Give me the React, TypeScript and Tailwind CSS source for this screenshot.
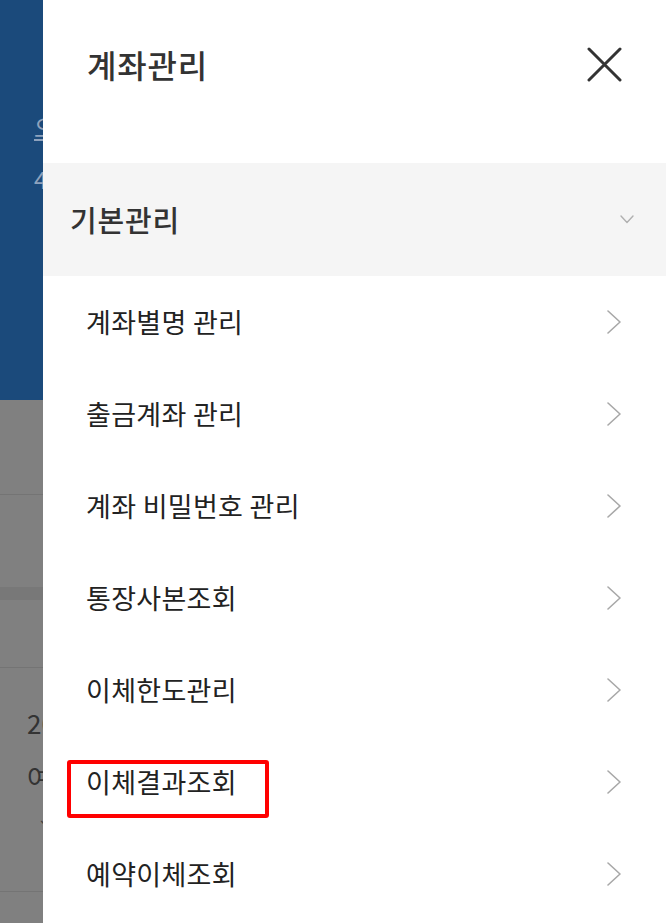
import React from "react";

const items = [
  "계좌별명 관리",
  "출금계좌 관리",
  "계좌 비밀번호 관리",
  "통장사본조회",
  "이체한도관리",
  "이체결과조회",
  "예약이체조회",
];

function ChevronRight() {
  return (
    <svg width="14" height="24" viewBox="0 0 14 24" fill="none">
      <path d="M1 1 L13 12 L1 23" stroke="#a8a8a8" strokeWidth="1.6" strokeLinecap="round" strokeLinejoin="round" />
    </svg>
  );
}

export default function App() {
  const font = { fontFamily: '"Noto Sans CJK KR", "Noto Sans", sans-serif' };
  return (
    <div className="flex w-[666px] h-[923px] overflow-hidden bg-white" style={font}>
      {/* dimmed background page */}
      <div className="w-[43px] shrink-0 flex flex-col overflow-hidden">
        <div className="h-[400px] bg-[#1b4a7b] flex flex-col pl-[34px] pt-[112px] text-[#8ea2bd] text-[24px] leading-[30px] whitespace-nowrap">
          <span className="underline">오늘</span>
          <span className="mt-[22px]">40,000</span>
        </div>
        <div className="flex-1 bg-[#808080] flex flex-col">
          <div className="h-[95px] border-b border-[#747474]" />
          <div className="h-[92px]" />
          <div className="h-[13px] bg-[#787878]" />
          <div className="h-[68px] border-b border-[#747474]" />
          <div className="h-[224px] flex flex-col pl-[27px] pt-[40px] text-[#333] text-[26px] leading-[30px] whitespace-nowrap border-b border-[#747474]">
            <span>2021</span>
            <span className="mt-[24px]">여행</span>
            <span className="mt-[10px] ml-[10px] text-[18px] text-[#444]">⌄</span>
          </div>
          <div className="flex-1" />
        </div>
      </div>

      {/* drawer */}
      <div className="flex-1 flex flex-col bg-white relative">
        <div className="h-[163px] shrink-0">
          <div className="h-[128px] flex items-center justify-between pl-[44px] pr-[44px]">
            <span className="text-[32px] font-medium text-[#333] tracking-[0.8px]">계좌관리</span>
            <svg width="35" height="35" viewBox="0 0 35 35" fill="none">
              <path d="M2 2 L33 33 M33 2 L2 33" stroke="#333" strokeWidth="3" strokeLinecap="round" />
            </svg>
          </div>
        </div>
        <div className="h-[113px] shrink-0 bg-[#f5f5f5] flex items-center justify-between pl-[27px] pr-[32px]">
          <span className="text-[29px] font-medium text-[#333] tracking-[0.8px]">기본관리</span>
          <svg width="14" height="9" viewBox="0 0 14 9" fill="none">
            <path d="M1 1 L7 7.5 L13 1" stroke="#b0b0b0" strokeWidth="1.4" strokeLinecap="round" strokeLinejoin="round" />
          </svg>
        </div>
        {items.map((t) => (
          <div key={t} className="h-[92px] shrink-0 flex items-center justify-between pl-[43px] pr-[45px]">
            <span className="text-[27px] text-[#222] tracking-[0.3px]">{t}</span>
            <ChevronRight />
          </div>
        ))}
        <div className="absolute left-[24px] top-[760px] w-[202px] h-[58px] border-4 border-[#ff0000] rounded-[3px]" />
      </div>
    </div>
  );
}
